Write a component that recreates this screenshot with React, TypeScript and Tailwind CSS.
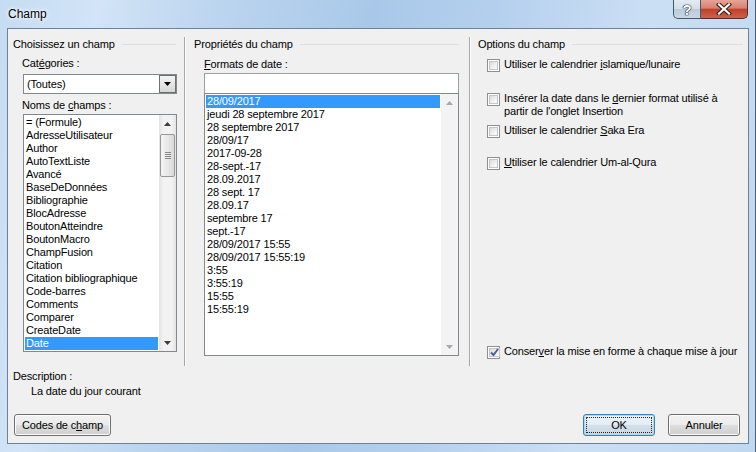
import React from "react";

const leftItems = [
  "= (Formule)",
  "AdresseUtilisateur",
  "Author",
  "AutoTextListe",
  "Avancé",
  "BaseDeDonnées",
  "Bibliographie",
  "BlocAdresse",
  "BoutonAtteindre",
  "BoutonMacro",
  "ChampFusion",
  "Citation",
  "Citation bibliographique",
  "Code-barres",
  "Comments",
  "Comparer",
  "CreateDate",
  "Date",
];

const formats = [
  "28/09/2017",
  "jeudi 28 septembre 2017",
  "28 septembre 2017",
  "28/09/17",
  "2017-09-28",
  "28-sept.-17",
  "28.09.2017",
  "28 sept. 17",
  "28.09.17",
  "septembre 17",
  "sept.-17",
  "28/09/2017 15:55",
  "28/09/2017 15:55:19",
  "3:55",
  "3:55:19",
  "15:55",
  "15:55:19",
];

function Arrow({ up, color }: { up?: boolean; color: string }) {
  return (
    <svg width="7" height="4" viewBox="0 0 7 4">
      {up ? (
        <path d="M0 4 L3.5 0 L7 4 Z" fill={color} />
      ) : (
        <path d="M0 0 L7 0 L3.5 4 Z" fill={color} />
      )}
    </svg>
  );
}

function CheckBox({ checked }: { checked?: boolean }) {
  return (
    <span className="w-[13px] h-[13px] shrink-0 border border-[#8e8f8f] bg-white p-[1px] flex">
      <span className="flex-1 border border-[#c2c5ca] bg-[linear-gradient(135deg,#d8dadd_0%,#eceef0_50%,#fbfbfb_100%)] flex items-center justify-center">
        {checked && (
          <svg width="9" height="9" viewBox="0 0 9 9">
            <path d="M1 4.5 L3.5 7 L8 1" fill="none" stroke="#4a5f9a" strokeWidth="2" />
          </svg>
        )}
      </span>
    </span>
  );
}

function GroupHeader({ label, className }: { label: string; className: string }) {
  return (
    <div className={className}>
      <span className="whitespace-nowrap">{label}</span>
      <span className="ml-[7px] flex-1 h-px bg-[#d5dfe5]" />
    </div>
  );
}

export default function App() {
  return (
    <div className="w-[756px] h-[452px] flex flex-col overflow-hidden border-r border-[#4d5f74] bg-[linear-gradient(100deg,#c6dcf2_0%,#d2e4f6_12%,#bcd5ef_26%,#a9c8e9_45%,#b5d0ee_60%,#cbdff4_78%,#c0d8f1_100%)] font-['Liberation_Sans',Arial,sans-serif] text-[11px] tracking-[-0.15px] text-black">
      {/* Title bar */}
      <div className="h-[28px] flex items-start shrink-0">
        <div className="pl-[8px] pt-[7px] text-[12px] leading-[15px] tracking-normal [text-shadow:0_0_6px_#ffffff,0_0_3px_#ffffff]">
          Champ
        </div>
        <div className="ml-auto mr-[7px] flex">
          <div className="w-[28px] h-[19px] border border-t-0 border-[#46586e] rounded-bl-[5px] bg-[linear-gradient(180deg,#e3ebf3_0%,#d3dfeb_48%,#bccbda_52%,#c9d7e5_100%)] flex items-center justify-center">
            <span className="text-white font-bold text-[15px] leading-none [text-shadow:0_0_1px_#1f2b3a,0_0_1px_#1f2b3a,0_0_1px_#1f2b3a,0_0_1px_#1f2b3a]">
              ?
            </span>
          </div>
          <div className="w-[47px] h-[19px] border border-t-0 border-l-0 border-[#5a2a24] rounded-br-[5px] bg-[linear-gradient(180deg,#e6a596_0%,#d9806e_45%,#c2402c_52%,#d0604a_100%)] flex items-center justify-center">
            <svg width="16" height="12" viewBox="0 0 16 12">
              <path d="M3 1.5 L13 10.5 M13 1.5 L3 10.5" stroke="#3a1a16" strokeWidth="4.2" strokeLinecap="square" />
              <path d="M3 1.5 L13 10.5 M13 1.5 L3 10.5" stroke="#ffffff" strokeWidth="2.2" strokeLinecap="square" />
            </svg>
          </div>
        </div>
      </div>

      {/* Client area */}
      <div className="ml-[7px] mr-[6px] h-[416px] border border-[#6e8196] bg-[#f0f0f0] flex flex-col">
        <div className="mt-[8px] h-[329px] flex">
          {/* Left column */}
          <div className="w-[176px] flex flex-col">
            <GroupHeader label="Choisissez un champ" className="h-[15px] leading-[15px] flex items-center pl-[5px] pr-[8px]" />
            <div className="mt-[4px] h-[15px] leading-[15px] pl-[14px]">
              Cat<span className="underline">é</span>gories :
            </div>
            <div className="mt-[3px] ml-[15px] w-[154px] h-[20px] border border-[#828790] bg-white flex items-center">
              <span className="pl-[3px] flex-1">(Toutes)</span>
              <span className="w-[17px] h-[18px] border border-[#707070] bg-[linear-gradient(180deg,#f2f2f2_0%,#e6e6e6_50%,#d6d6d6_100%)] flex items-center justify-center">
                <Arrow color="#000000" />
              </span>
            </div>
            <div className="mt-[4px] h-[15px] leading-[15px] pl-[14px]">
              Noms de <span className="underline">c</span>hamps :
            </div>
            <div className="mt-[1px] ml-[15px] w-[154px] h-[238px] border border-[#828790] bg-white flex">
              <div className="flex-1 pt-[1px] px-[1px] flex flex-col">
                {leftItems.map((it) => (
                  <div
                    key={it}
                    className={
                      it === "Date"
                        ? "h-[13px] leading-[13px] pl-[1px] whitespace-nowrap bg-[#3399ff] text-white"
                        : "h-[13px] leading-[13px] pl-[1px] whitespace-nowrap"
                    }
                  >
                    {it}
                  </div>
                ))}
              </div>
              <div className="w-[17px] flex flex-col bg-[linear-gradient(90deg,#e3e3e3_0%,#f2f2f2_25%,#f2f2f2_75%,#e3e3e3_100%)]">
                <div className="h-[17px] flex items-center justify-center">
                  <Arrow up color="#3c3c3c" />
                </div>
                <div className="mt-[2px] mx-[1px] h-[43px] rounded-[2px] border border-[#979797] bg-[linear-gradient(90deg,#f4f4f4_0%,#e8e8e8_50%,#d9d9d9_100%)] flex flex-col items-center justify-center gap-[1px]">
                  <span className="w-[6px] h-px bg-[#8a8a8a]" />
                  <span className="w-[6px] h-px bg-[#8a8a8a]" />
                  <span className="w-[6px] h-px bg-[#8a8a8a]" />
                  <span className="w-[6px] h-px bg-[#8a8a8a]" />
                </div>
                <div className="mt-auto h-[17px] flex items-center justify-center">
                  <Arrow color="#3c3c3c" />
                </div>
              </div>
            </div>
          </div>

          <div className="w-px bg-[#a7a7a7]" />
          <div className="w-px bg-white" />

          {/* Middle column */}
          <div className="w-[283px] flex flex-col">
            <GroupHeader label="Propriétés du champ" className="h-[15px] leading-[15px] flex items-center pl-[8px] pr-[10px]" />
            <div className="mt-[5px] h-[15px] leading-[15px] pl-[18px]">
              <span className="underline">F</span>ormats de date :
            </div>
            <div className="mt-[1px] ml-[18px] w-[255px] h-[20px] border border-b-0 border-[#9a9ea5] bg-white" />
            <div className="ml-[18px] w-[255px] h-[263px] border border-[#828790] bg-white flex">
              <div className="flex-1 pt-[1px] px-[1px] flex flex-col">
                {formats.map((it, i) => (
                  <div
                    key={it}
                    className={
                      i === 0
                        ? "h-[13px] leading-[13px] pl-[1px] whitespace-nowrap bg-[#3399ff] text-white"
                        : "h-[13px] leading-[13px] pl-[1px] whitespace-nowrap"
                    }
                  >
                    {it}
                  </div>
                ))}
              </div>
              <div className="w-[17px] flex flex-col bg-[#f3f3f3]">
                <div className="h-[17px] flex items-center justify-center">
                  <Arrow up color="#a8a8a8" />
                </div>
                <div className="mt-auto h-[17px] flex items-center justify-center">
                  <Arrow color="#a8a8a8" />
                </div>
              </div>
            </div>
          </div>

          <div className="w-px bg-[#a7a7a7]" />
          <div className="w-px bg-white" />

          {/* Right column */}
          <div className="flex-1 flex flex-col">
            <GroupHeader label="Options du champ" className="h-[15px] leading-[15px] flex items-center pl-[7px] pr-[5px]" />
            <div className="mt-[6px] pl-[16px] flex items-start gap-[4px]">
              <span className="mt-[1px]"><CheckBox /></span>
              <span className="leading-[13px]">
                Utiliser le calendrier <span className="underline">i</span>slamique/lunaire
              </span>
            </div>
            <div className="mt-[20px] pl-[16px] flex items-start gap-[4px]">
              <span className="mt-[1px]"><CheckBox /></span>
              <span className="leading-[13px]">
                Insérer la date dans le <span className="underline">d</span>ernier format utilisé à
                <br />
                partir de l'onglet Insertion
              </span>
            </div>
            <div className="mt-[6px] pl-[16px] flex items-start gap-[4px]">
              <span className="mt-[1px]"><CheckBox /></span>
              <span className="leading-[13px]">
                Utiliser le calendrier <span className="underline">S</span>aka Era
              </span>
            </div>
            <div className="mt-[18px] pl-[16px] flex items-start gap-[4px]">
              <span className="mt-[1px]"><CheckBox /></span>
              <span className="leading-[13px]">
                <span className="underline">U</span>tiliser le calendrier Um-al-Qura
              </span>
            </div>
            <div className="mt-auto mb-[7px] pl-[16px] flex items-start gap-[4px]">
              <span className="mt-[1px]"><CheckBox checked /></span>
              <span className="leading-[13px]">
                Conser<span className="underline">v</span>er la mise en forme à chaque mise à jour
              </span>
            </div>
          </div>
        </div>

        {/* Description */}
        <div className="mt-[3px] h-[15px] leading-[15px] pl-[5px]">Description :</div>
        <div className="h-[15px] leading-[15px] pl-[23px]">La date du jour courant</div>

        {/* Buttons */}
        <div className="mt-[15px] h-[22px] flex pl-[6px] pr-[8px]">
          <button className="w-[97px] h-[22px] rounded-[3px] border border-[#707070] bg-[linear-gradient(180deg,#f2f2f2_0%,#ebebeb_48%,#dddddd_52%,#cfcfcf_100%)] shadow-[inset_0_0_0_1px_#fbfbfb] flex items-center justify-center">
            Codes de c<span className="underline">h</span>amp
          </button>
          <div className="flex-1" />
          <button className="w-[72px] h-[22px] rounded-[3px] border border-[#3c7fb1] bg-[linear-gradient(180deg,#eef4f8_0%,#e4edf3_48%,#d3e0ea_52%,#c8d7e3_100%)] shadow-[inset_0_0_0_1px_#a8d8f3] p-[2px] flex">
            <span className="flex-1 border border-dotted border-[#222] flex items-center justify-center">OK</span>
          </button>
          <button className="ml-[13px] w-[72px] h-[22px] rounded-[3px] border border-[#707070] bg-[linear-gradient(180deg,#f2f2f2_0%,#ebebeb_48%,#dddddd_52%,#cfcfcf_100%)] shadow-[inset_0_0_0_1px_#fbfbfb] flex items-center justify-center">
            Annuler
          </button>
        </div>
      </div>
    </div>
  );
}
